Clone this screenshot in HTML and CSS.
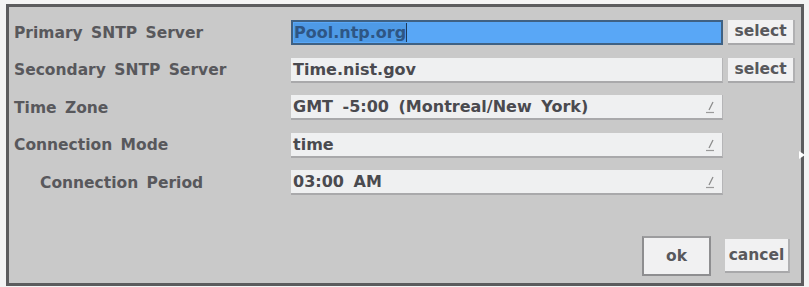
FILE: index.html
```html
<!DOCTYPE html>
<html>
<head>
<meta charset="utf-8">
<link rel="stylesheet" href="styles.css">
</head>
<body>
<div class="window">
  <div class="form">
    <div class="label">Primary SNTP Server</div>
    <div class="field field-selected"><span class="sel">Pool.ntp.org</span></div>
    <div class="btn-select">select</div>

    <div class="label">Secondary SNTP Server</div>
    <div class="field">Time.nist.gov</div>
    <div class="btn-select">select</div>

    <div class="label">Time Zone</div>
    <div class="field dropdown">GMT -5:00 (Montreal/New York)<svg class="grip" width="12" height="14" viewBox="0 0 12 14"><path d="M9 2 L5 10" stroke="#8a8a8a" stroke-width="1.3" fill="none"/><path d="M2 12.5 H10" stroke="#9a9a9a" stroke-width="1.2"/></svg></div>
    <div></div>

    <div class="label">Connection Mode</div>
    <div class="field dropdown">time<svg class="grip" width="12" height="14" viewBox="0 0 12 14"><path d="M9 2 L5 10" stroke="#8a8a8a" stroke-width="1.3" fill="none"/><path d="M2 12.5 H10" stroke="#9a9a9a" stroke-width="1.2"/></svg></div>
    <div></div>

    <div class="label indent">Connection Period</div>
    <div class="field dropdown">03:00 AM<svg class="grip" width="12" height="14" viewBox="0 0 12 14"><path d="M9 2 L5 10" stroke="#8a8a8a" stroke-width="1.3" fill="none"/><path d="M2 12.5 H10" stroke="#9a9a9a" stroke-width="1.2"/></svg></div>
    <div></div>
  </div>
  <div class="actions">
    <div class="btn btn-ok">ok</div>
    <div class="btn btn-cancel">cancel</div>
  </div>
  <div class="pointer"></div>
</div>
</body>
</html>
```
FILE: styles.css
```css
html, body {
  margin: 0;
  padding: 0;
  background: #f4f4f4;
}
body {
  width: 809px;
  height: 287px;
  overflow: hidden;
  font-family: "DejaVu Sans", Verdana, sans-serif;
  font-weight: bold;
}
.window {
  position: relative;
  box-sizing: border-box;
  margin: 4px 0 0 6px;
  width: 798px;
  height: 282px;
  border: 3px solid #5c5c5e;
  background: #c9c9c9;
  padding: 13px 0 0 5px;
}
.form {
  display: grid;
  grid-template-columns: 272px 432px 67px;
  column-gap: 5px;
  grid-auto-rows: 25px;
  row-gap: 12.5px;
  align-items: center;
}
.label {
  color: #58585c;
  font-size: 15.5px;
  word-spacing: 3px;
}
.label.indent {
  padding-left: 26px;
}
.field {
  position: relative;
  box-sizing: border-box;
  height: 25px;
  background: #eff0f1;
  border-bottom: 2px solid #a9a9ab;
  border-right: 1px solid #b5b5b7;
  color: #4a4a4f;
  font-size: 16px;
  word-spacing: 4px;
  line-height: 24px;
  padding-left: 2px;
  white-space: nowrap;
}
.field-selected {
  background: #59a7f6;
  border: 2px solid #3f6183;
  line-height: 21px;
  padding-left: 1px;
}
.field-selected .sel {
  color: #2e5684;
  background: #4e9ae6;
  border-right: 1px solid #1e3a5c;
}
.grip {
  position: absolute;
  right: 6px;
  top: 5px;
}
.btn-select {
  box-sizing: border-box;
  height: 25px;
  background: #f1f1f2;
  border-bottom: 2px solid #a8a8aa;
  border-right: 2px solid #b0b0b2;
  color: #58585c;
  font-size: 15.5px;
  line-height: 23px;
  text-align: center;
}
.actions {
  display: flex;
  justify-content: flex-end;
  align-items: center;
  gap: 14px;
  margin-top: 41px;
  padding-right: 11px;
}
.btn {
  box-sizing: border-box;
  color: #58585c;
  font-size: 15.5px;
  text-align: center;
  background: #f1f1f2;
}
.btn-ok {
  width: 69px;
  height: 40px;
  line-height: 36px;
  border: 2px solid #8e8e90;
  border-top-color: #9c9c9e;
}
.btn-cancel {
  width: 65px;
  height: 34px;
  line-height: 32px;
  border-bottom: 2px solid #a8a8aa;
  border-right: 2px solid #b0b0b2;
}
.pointer {
  position: absolute;
  right: -4px;
  top: 144px;
  width: 0;
  height: 0;
  border-left: 6px solid #ffffff;
  border-top: 4px solid transparent;
  border-bottom: 4px solid transparent;
}
```
